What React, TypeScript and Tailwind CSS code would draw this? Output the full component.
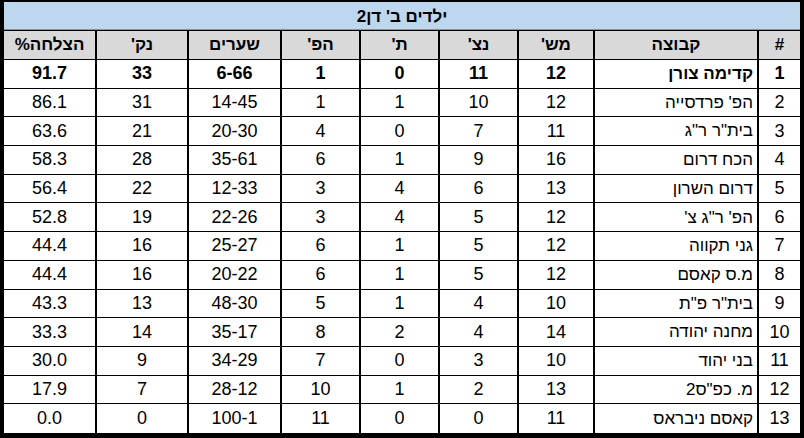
import React from "react";

type Row = {
  pos: number;
  team: string;
  games: number;
  wins: number;
  draws: number;
  losses: number;
  goals: string;
  points: number;
  pct: string;
};

const rows: Row[] = [
  { pos: 1, team: "קדימה צורן", games: 12, wins: 11, draws: 0, losses: 1, goals: "6-66", points: 33, pct: "91.7" },
  { pos: 2, team: "הפ' פרדסייה", games: 12, wins: 10, draws: 1, losses: 1, goals: "14-45", points: 31, pct: "86.1" },
  { pos: 3, team: 'בית"ר ר"ג', games: 11, wins: 7, draws: 0, losses: 4, goals: "20-30", points: 21, pct: "63.6" },
  { pos: 4, team: "הכח דרום", games: 16, wins: 9, draws: 1, losses: 6, goals: "35-61", points: 28, pct: "58.3" },
  { pos: 5, team: "דרום השרון", games: 13, wins: 6, draws: 4, losses: 3, goals: "12-33", points: 22, pct: "56.4" },
  { pos: 6, team: `הפ' ר"ג צ'`, games: 12, wins: 5, draws: 4, losses: 3, goals: "22-26", points: 19, pct: "52.8" },
  { pos: 7, team: "גני תקווה", games: 12, wins: 5, draws: 1, losses: 6, goals: "25-27", points: 16, pct: "44.4" },
  { pos: 8, team: "מ.ס קאסם", games: 12, wins: 5, draws: 1, losses: 6, goals: "20-22", points: 16, pct: "44.4" },
  { pos: 9, team: 'בית"ר פ"ת', games: 10, wins: 4, draws: 1, losses: 5, goals: "48-30", points: 13, pct: "43.3" },
  { pos: 10, team: "מחנה יהודה", games: 14, wins: 4, draws: 2, losses: 8, goals: "35-17", points: 14, pct: "33.3" },
  { pos: 11, team: "בני יהוד", games: 10, wins: 3, draws: 0, losses: 7, goals: "34-29", points: 9, pct: "30.0" },
  { pos: 12, team: 'מ. כפ"ס2', games: 13, wins: 2, draws: 1, losses: 10, goals: "28-12", points: 7, pct: "17.9" },
  { pos: 13, team: "קאסם ניבראס", games: 11, wins: 0, draws: 0, losses: 11, goals: "100-1", points: 0, pct: "0.0" },
];

const headers = ["#", "קבוצה", "מש'", "נצ'", "ת'", "הפ'", "שערים", "נק'", "הצלחה%"];

const cols = "grid grid-cols-[43px_164px_76px_79px_79px_79px_93px_92px_91px]";

function Cell({ children, last, team }: { children: React.ReactNode; last?: boolean; team?: boolean }) {
  return (
    <div
      className={`flex items-center ${team ? "justify-start pr-1" : "justify-center"} ${
        last ? "" : "border-l-2 border-black"
      }`}
    >
      {children}
    </div>
  );
}

export default function App() {
  return (
    <div
      dir="rtl"
      className="w-[804px] h-[438px] bg-black pt-[2px] pl-[4px] pr-[4px] pb-[5px] text-[17px] text-black"
      style={{ fontFamily: '"Liberation Sans", "DejaVu Sans", sans-serif' }}
    >
      <div className="bg-white h-full flex flex-col">
        {/* title */}
        <div className="h-[28px] pt-[2px] bg-[#bdd7ee] border-b border-[#8f8f8f] flex items-center justify-center font-bold">
          ילדים ב' דן2
        </div>

        {/* header */}
        <div className={`${cols} h-[30px] bg-[#d9d9d9] border-t border-b border-black font-bold`}>
          {headers.map((h, i) => (
            <Cell key={h} last={i === headers.length - 1}>
              {h}
            </Cell>
          ))}
        </div>

        {/* rows */}
        {rows.map((r, idx) => (
          <div
            key={r.pos}
            className={`${cols} h-[28.7px] text-[18px] ${idx < rows.length - 1 ? "border-b border-black" : ""} ${
              idx === 0 ? "font-bold" : ""
            }`}
          >
            <Cell>{r.pos}</Cell>
            <Cell team>
              <span className="text-[17px]">{r.team}</span>
            </Cell>
            <Cell>{r.games}</Cell>
            <Cell>{r.wins}</Cell>
            <Cell>{r.draws}</Cell>
            <Cell>{r.losses}</Cell>
            <Cell>
              <span dir="ltr">{r.goals}</span>
            </Cell>
            <Cell>{r.points}</Cell>
            <Cell last>{r.pct}</Cell>
          </div>
        ))}
      </div>
    </div>
  );
}
